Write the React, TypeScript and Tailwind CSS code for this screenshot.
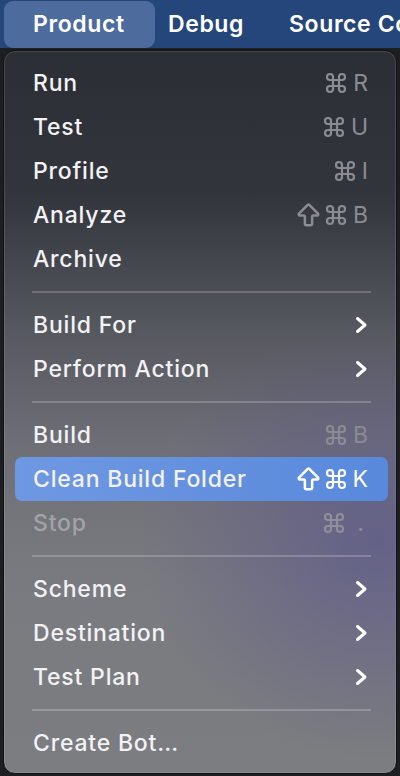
import { ReactNode } from "react";
import { ArrowBigUp, Command } from "lucide-react";

type Item =
  | { kind: "item"; label: string; keys?: string[]; sub?: boolean; active?: boolean; disabled?: boolean }
  | { kind: "sep" };

const items: Item[] = [
  { kind: "item", label: "Run", keys: ["cmd", "R"] },
  { kind: "item", label: "Test", keys: ["cmd", "U"] },
  { kind: "item", label: "Profile", keys: ["cmd", "I"] },
  { kind: "item", label: "Analyze", keys: ["shift", "cmd", "B"] },
  { kind: "item", label: "Archive" },
  { kind: "sep" },
  { kind: "item", label: "Build For", sub: true },
  { kind: "item", label: "Perform Action", sub: true },
  { kind: "sep" },
  { kind: "item", label: "Build", keys: ["cmd", "B"] },
  { kind: "item", label: "Clean Build Folder", keys: ["shift", "cmd", "K"], active: true },
  { kind: "item", label: "Stop", keys: ["cmd", "."], disabled: true },
  { kind: "sep" },
  { kind: "item", label: "Scheme", sub: true },
  { kind: "item", label: "Destination", sub: true },
  { kind: "item", label: "Test Plan", sub: true },
  { kind: "sep" },
  { kind: "item", label: "Create Bot…" },
];

function Chevron() {
  return (
    <svg width="14" height="18" viewBox="0 0 14 18" className="text-white">
      <path d="M3.5 2.5 L11 9 L3.5 15.5" fill="none" stroke="currentColor" strokeWidth="3" strokeLinecap="round" strokeLinejoin="round" />
    </svg>
  );
}

function Keys({ keys, tone }: { keys: string[]; tone: string }) {
  return (
    <span className={`flex items-center ${tone}`}>
      {keys.map((k, i) => {
        if (k === "cmd") return <Command key={i} size={24} strokeWidth={2.2} className="mr-[3px]" />;
        if (k === "shift") return <ArrowBigUp key={i} size={29} strokeWidth={2.1} className="mr-[1px]" />;
        return (
          <span key={i} className={"text-[23px] leading-none " + (k === "." ? "ml-[8px] mr-[4px]" : "ml-[2px]")}>
            {k}
          </span>
        );
      })}
    </span>
  );
}

function Row({ item }: { item: Extract<Item, { kind: "item" }> }) {
  let right: ReactNode = null;
  const keyTone = item.active ? "text-white" : item.disabled ? "text-[#8e8f98]" : "text-[#8a8c93]";
  if (item.keys) right = <Keys keys={item.keys} tone={keyTone} />;
  if (item.sub) right = <Chevron />;
  return (
    <div
      className={
        "ml-[11px] mr-[8px] flex h-[44px] items-center justify-between rounded-[7px] pl-[18px] pr-[20px] " +
        (item.active ? "bg-[linear-gradient(90deg,#6f98e2,#5889db)]" : "")
      }
    >
      <span className={"text-[23px] font-medium tracking-[0.8px] " + (item.disabled ? "text-[#a2a3aa]" : "text-[#f2f2f4]")}>
        {item.label}
      </span>
      {right}
    </div>
  );
}

export default function App() {
  return (
    <div className="flex h-[776px] w-[400px] flex-col overflow-hidden bg-[#1d1e22] font-['Inter',sans-serif]">
      <div className="flex h-[48px] shrink-0 items-center overflow-hidden bg-[#25467a] text-[23px] font-semibold tracking-[0.6px] text-white">
        <div className="ml-[4px] flex h-[47px] w-[151px] shrink-0 items-center rounded-[9px] bg-[#4d6b9c] pl-[29px]">Product</div>
        <span className="ml-[13px] shrink-0">Debug</span>
        <span className="ml-[45px] shrink-0 whitespace-nowrap">Source Control</span>
      </div>
      <div className="mx-[3px] mt-[2px] h-[724px] rounded-[12px] border border-[#111214] bg-[linear-gradient(180deg,#2c2e35_0%,#33353c_20%,#55575e_38%,#6f7077_55%,#7a7b80_75%,#7c7d80_100%)] shadow-[inset_0_0_0_1px_rgba(255,255,255,0.12)]">
        <div className="h-full rounded-[12px] bg-[radial-gradient(ellipse_60%_30%_at_95%_68%,rgba(92,88,140,0.7),transparent)] pt-[10px]">
          {items.map((it, i) =>
            it.kind === "sep" ? (
              <div key={i} className="flex h-[22px] items-center pl-[28px] pr-[25px]">
                <div className="h-[2px] w-full bg-white/20" />
              </div>
            ) : (
              <Row key={i} item={it} />
            )
          )}
        </div>
      </div>
    </div>
  );
}
